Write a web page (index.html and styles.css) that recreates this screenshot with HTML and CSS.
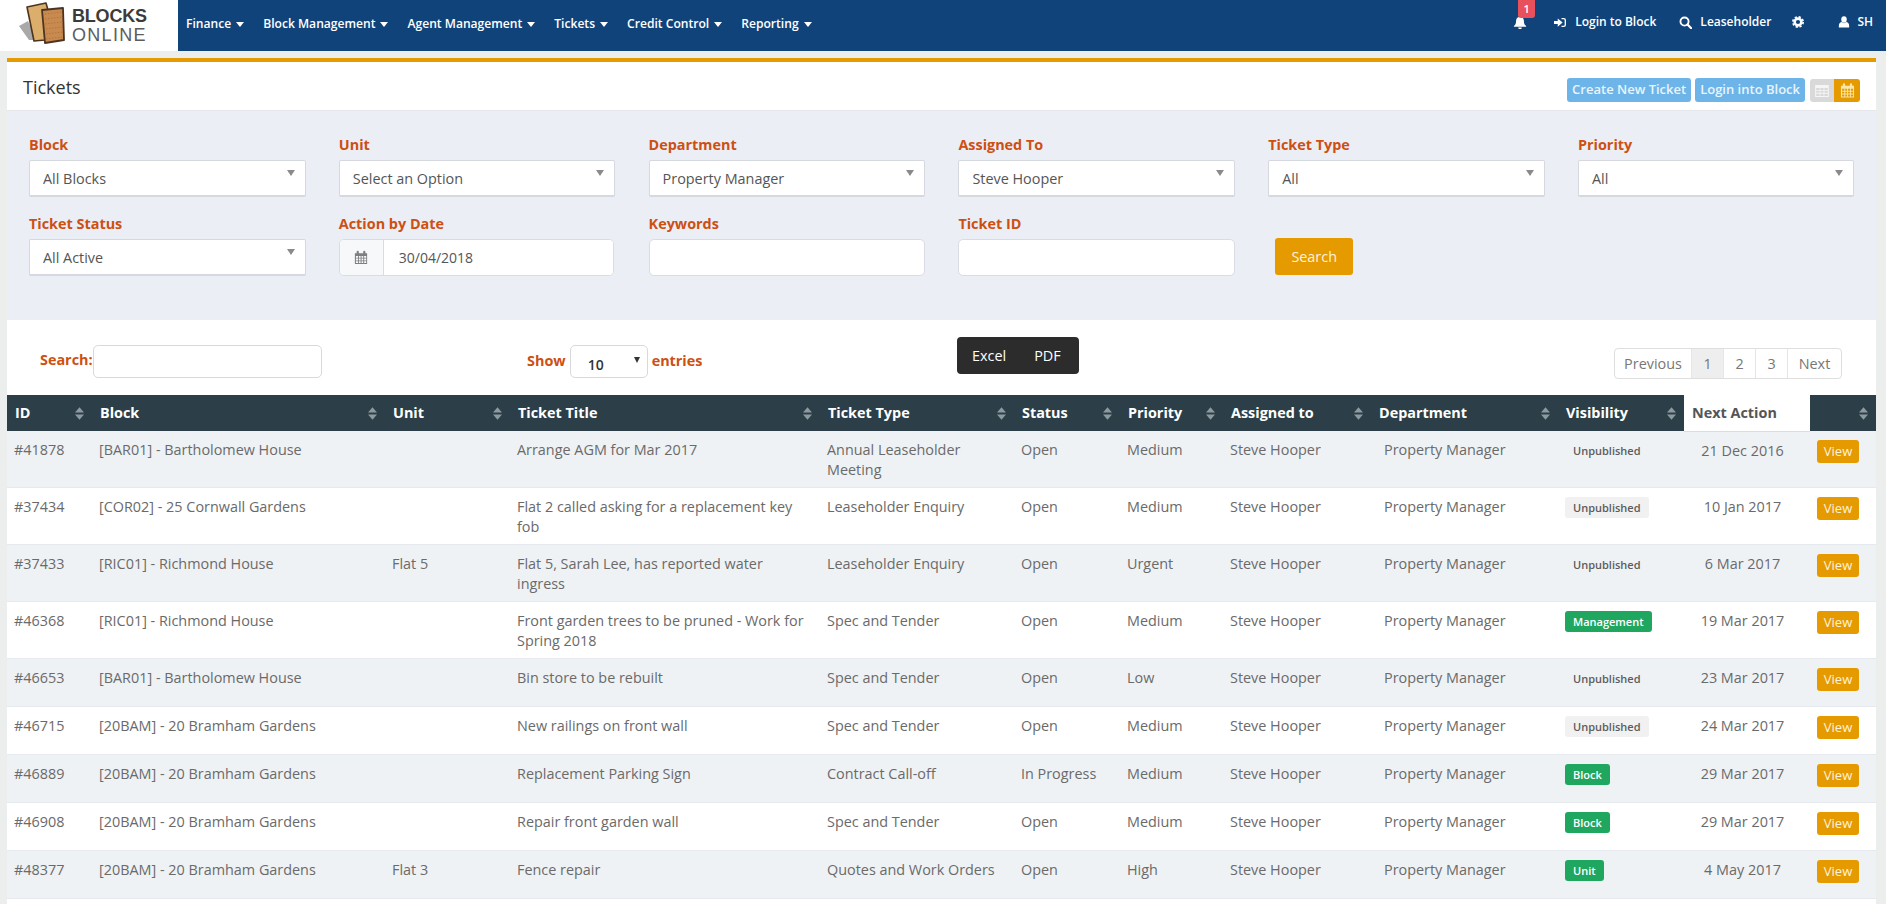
FILE: index.html
```html
<!DOCTYPE html>
<html lang="en">
<head>
<meta charset="utf-8">
<title>Tickets - Blocks Online</title>
<link rel="stylesheet" href="styles.css">
</head>
<body>
<svg class="defs" width="0" height="0" aria-hidden="true">
  <defs>
    <symbol id="i-sort" viewBox="0 0 10 14"><path d="M5 0 10 6H0zM5 14 0 8H10z"/></symbol>
    <symbol id="i-cal" viewBox="0 0 16 16"><path fill-rule="evenodd" d="M1 3h2V1.500a1 1 0 0 1 2.500 0V3h5V1.500a1 1 0 0 1 2.500 0V3h2v12.500H1zM2.200 6.200v2h2.400v-2zm3.400 0v2h2v-2zm3 0v2h2v-2zm3 0v2h2.400v-2zM2.200 9.200v2.100h2.400V9.200zm3.400 0v2.100h2V9.200zm3 0v2.100h2V9.200zm3 0v2.100h2.400V9.200zM2.200 12.300v2h2.400v-2zm3.400 0v2h2v-2zm3 0v2h2v-2zm3 0v2h2.400v-2z"/></symbol>
    <symbol id="i-grid" viewBox="0 0 16 14"><path fill-rule="evenodd" d="M0 0h16v14H0zM1.200 3.500v2.300h4v-2.300zm5 0v2.300h3.600v-2.300zm4.600 0v2.300h4v-2.300zM1.200 6.800v2.300h4V6.800zm5 0v2.300h3.600V6.800zm4.600 0v2.300h4V6.800zM1.200 10.100v2.700h4v-2.700zm5 0v2.700h3.600v-2.700zm4.600 0v2.700h4v-2.700z"/></symbol>
  </defs>
</svg>

<header class="topbar">
  <a class="logo">
    <svg class="logo-mark" viewBox="0 0 50 44" aria-hidden="true">
      <path d="M0 24 9 19 18 38 10 38z" fill="#a9a9a9"/>
      <path d="M8 5 27 1 29 8 26 38 15 39z" fill="#dcae6c" stroke="#4c3420" stroke-width="1.600" stroke-linejoin="round"/>
      <path d="M23 8 44 6 45 38 26 41z" fill="#c98a50" stroke="#4c3420" stroke-width="1.800" stroke-linejoin="round"/>
      <path d="M26 12 43 10M26 17 43 15M26 22 43 20M27 27 44 25M27 32 44 30M27 37 44 35" stroke="#a86f3c" stroke-width=".8" stroke-dasharray="1.500 1.500"/>
    </svg>
    <span class="logo-text"><b>BLOCKS</b><i>ONLINE</i></span>
  </a>
  <nav class="nav">
    <a>Finance<span class="caret"></span></a>
    <a>Block Management<span class="caret"></span></a>
    <a>Agent Management<span class="caret"></span></a>
    <a>Tickets<span class="caret"></span></a>
    <a>Credit Control<span class="caret"></span></a>
    <a>Reporting<span class="caret"></span></a>
  </nav>
  <div class="topright">
    <a class="bell">
      <svg viewBox="0 0 16 16" width="14" height="14" aria-hidden="true"><path d="M8 1a1.200 1.200 0 0 1 1.200 1.200C11.500 2.800 12.500 4.800 12.500 7c0 3 1 4.500 2.500 5.500v1H1v-1C2.500 11.500 3.500 10 3.500 7c0-2.200 1-4.200 3.300-4.800A1.200 1.200 0 0 1 8 1zM6 14.300a2 2 0 0 0 4 0z"/></svg>
      <span class="badge-count">1</span>
    </a>
    <a class="tr-login">
      <svg viewBox="0 0 16 14" width="12" height="11" aria-hidden="true"><path d="M0 5h5V1.500L11.500 7 5 12.500V9H0zM10 1h3a3 3 0 0 1 3 3v6a3 3 0 0 1-3 3h-3v-1.800h3a1.200 1.200 0 0 0 1.200-1.200V4A1.200 1.200 0 0 0 13 2.800h-3z"/></svg>
      Login to Block
    </a>
    <a class="tr-lease">
      <svg viewBox="0 0 16 16" width="13" height="13" aria-hidden="true"><circle cx="6.800" cy="6.800" r="5" fill="none" stroke="#fff" stroke-width="2.300"/><path d="M10.500 10.500 15 15" stroke="#fff" stroke-width="2.800" stroke-linecap="round"/></svg>
      Leaseholder
    </a>
    <a class="tr-cog">
      <svg viewBox="0 0 16 16" width="12" height="12" aria-hidden="true"><circle cx="8" cy="8" r="4.500" fill="none" stroke="#fff" stroke-width="3.400"/><circle cx="8" cy="8" r="6.900" fill="none" stroke="#fff" stroke-width="2.200" stroke-dasharray="3 2.420"/></svg>
    </a>
    <a class="tr-user">
      <svg viewBox="0 0 14 14" width="12" height="12" aria-hidden="true"><ellipse cx="7" cy="4" rx="3.200" ry="3.800"/><path d="M1 13.500V11c0-2.500 1.800-3.700 3.500-4a3.400 3.400 0 0 0 5 0C11.200 7.300 13 8.500 13 11v2.500z"/></svg>
      SH
    </a>
  </div>
</header>

<main class="page">
  <div class="titlebar">
    <h1>Tickets</h1>
    <div class="actions">
      <a class="btn-blue">Create New Ticket</a>
      <a class="btn-blue">Login into Block</a>
      <div class="toggle">
        <span class="tg-grid"><svg width="14" height="12" aria-hidden="true"><use href="#i-grid"/></svg></span>
        <span class="tg-cal"><svg width="15" height="15" aria-hidden="true"><use href="#i-cal"/></svg></span>
      </div>
    </div>
  </div>

  <section class="filters">
    <div class="field"><label>Block</label><div class="select"><select><option>All Blocks</option></select></div></div>
    <div class="field"><label>Unit</label><div class="select"><select><option>Select an Option</option></select></div></div>
    <div class="field"><label>Department</label><div class="select"><select><option>Property Manager</option></select></div></div>
    <div class="field"><label>Assigned To</label><div class="select"><select><option>Steve Hooper</option></select></div></div>
    <div class="field"><label>Ticket Type</label><div class="select"><select><option>All</option></select></div></div>
    <div class="field"><label>Priority</label><div class="select"><select><option>All</option></select></div></div>
    <div class="field"><label>Ticket Status</label><div class="select"><select><option>All Active</option></select></div></div>
    <div class="field"><label>Action by Date</label>
      <div class="dategroup">
        <span class="dateicon"><svg width="14" height="15" aria-hidden="true"><use href="#i-cal"/></svg></span>
        <input class="dateinput" type="text" value="30/04/2018">
      </div>
    </div>
    <div class="field"><label>Keywords</label><input class="textinput" type="text"></div>
    <div class="field"><label>Ticket ID</label><input class="textinput" type="text"></div>
    <div class="field field-action"><button class="btn-search" type="button">Search</button></div>
  </section>

  <section class="results">
    <div class="toolbar">
      <div class="tb-search"><label>Search:</label><input type="text"></div>
      <div class="tb-show">
        <span>Show</span>
        <div class="lenselect"><select><option>10</option></select></div>
        <span>entries</span>
      </div>
      <div class="tb-export"><a>Excel</a><a>PDF</a></div>
      <div class="pager">
        <a class="pg-prev">Previous</a><a class="pg-n is-active">1</a><a class="pg-n">2</a><a class="pg-n">3</a><a class="pg-next">Next</a>
      </div>
    </div>

    <table class="grid">
      <colgroup>
        <col class="c-id"><col class="c-block"><col class="c-unit"><col class="c-title"><col class="c-type"><col class="c-status"><col class="c-prio"><col class="c-asg"><col class="c-dept"><col class="c-vis"><col class="c-next"><col class="c-act">
      </colgroup>
      <thead>
        <tr>
          <th><div class="th">ID<svg class="sort"><use href="#i-sort"/></svg></div></th>
          <th><div class="th">Block<svg class="sort"><use href="#i-sort"/></svg></div></th>
          <th><div class="th">Unit<svg class="sort"><use href="#i-sort"/></svg></div></th>
          <th><div class="th">Ticket Title<svg class="sort"><use href="#i-sort"/></svg></div></th>
          <th><div class="th">Ticket Type<svg class="sort"><use href="#i-sort"/></svg></div></th>
          <th><div class="th">Status<svg class="sort"><use href="#i-sort"/></svg></div></th>
          <th><div class="th">Priority<svg class="sort"><use href="#i-sort"/></svg></div></th>
          <th><div class="th">Assigned to<svg class="sort"><use href="#i-sort"/></svg></div></th>
          <th><div class="th">Department<svg class="sort"><use href="#i-sort"/></svg></div></th>
          <th><div class="th">Visibility<svg class="sort"><use href="#i-sort"/></svg></div></th>
          <th class="th-active"><div class="th">Next Action</div></th>
          <th><div class="th th-end"><svg class="sort"><use href="#i-sort"/></svg></div></th>
        </tr>
      </thead>
      <tbody>
        <tr><td>#41878</td><td>[BAR01] - Bartholomew House</td><td></td><td>Arrange AGM for Mar 2017</td><td>Annual Leaseholder Meeting</td><td>Open</td><td>Medium</td><td>Steve Hooper</td><td class="td-dept">Property Manager</td><td><span class="tag tag-grey">Unpublished</span></td><td class="td-date">21 Dec 2016</td><td><a class="btn-view">View</a></td></tr>
        <tr><td>#37434</td><td>[COR02] - 25 Cornwall Gardens</td><td></td><td>Flat 2 called asking for a replacement key fob</td><td>Leaseholder Enquiry</td><td>Open</td><td>Medium</td><td>Steve Hooper</td><td class="td-dept">Property Manager</td><td><span class="tag tag-grey">Unpublished</span></td><td class="td-date">10 Jan 2017</td><td><a class="btn-view">View</a></td></tr>
        <tr><td>#37433</td><td>[RIC01] - Richmond House</td><td>Flat 5</td><td>Flat 5, Sarah Lee, has reported water ingress</td><td>Leaseholder Enquiry</td><td>Open</td><td>Urgent</td><td>Steve Hooper</td><td class="td-dept">Property Manager</td><td><span class="tag tag-grey">Unpublished</span></td><td class="td-date">6 Mar 2017</td><td><a class="btn-view">View</a></td></tr>
        <tr><td>#46368</td><td>[RIC01] - Richmond House</td><td></td><td>Front garden trees to be pruned - Work for Spring 2018</td><td>Spec and Tender</td><td>Open</td><td>Medium</td><td>Steve Hooper</td><td class="td-dept">Property Manager</td><td><span class="tag tag-green">Management</span></td><td class="td-date">19 Mar 2017</td><td><a class="btn-view">View</a></td></tr>
        <tr><td>#46653</td><td>[BAR01] - Bartholomew House</td><td></td><td>Bin store to be rebuilt</td><td>Spec and Tender</td><td>Open</td><td>Low</td><td>Steve Hooper</td><td class="td-dept">Property Manager</td><td><span class="tag tag-grey">Unpublished</span></td><td class="td-date">23 Mar 2017</td><td><a class="btn-view">View</a></td></tr>
        <tr><td>#46715</td><td>[20BAM] - 20 Bramham Gardens</td><td></td><td>New railings on front wall</td><td>Spec and Tender</td><td>Open</td><td>Medium</td><td>Steve Hooper</td><td class="td-dept">Property Manager</td><td><span class="tag tag-grey">Unpublished</span></td><td class="td-date">24 Mar 2017</td><td><a class="btn-view">View</a></td></tr>
        <tr><td>#46889</td><td>[20BAM] - 20 Bramham Gardens</td><td></td><td>Replacement Parking Sign</td><td>Contract Call-off</td><td>In Progress</td><td>Medium</td><td>Steve Hooper</td><td class="td-dept">Property Manager</td><td><span class="tag tag-green">Block</span></td><td class="td-date">29 Mar 2017</td><td><a class="btn-view">View</a></td></tr>
        <tr><td>#46908</td><td>[20BAM] - 20 Bramham Gardens</td><td></td><td>Repair front garden wall</td><td>Spec and Tender</td><td>Open</td><td>Medium</td><td>Steve Hooper</td><td class="td-dept">Property Manager</td><td><span class="tag tag-green">Block</span></td><td class="td-date">29 Mar 2017</td><td><a class="btn-view">View</a></td></tr>
        <tr><td>#48377</td><td>[20BAM] - 20 Bramham Gardens</td><td>Flat 3</td><td>Fence repair</td><td>Quotes and Work Orders</td><td>Open</td><td>High</td><td>Steve Hooper</td><td class="td-dept">Property Manager</td><td><span class="tag tag-green">Unit</span></td><td class="td-date">4 May 2017</td><td><a class="btn-view">View</a></td></tr>
      </tbody>
    </table>
  </section>
</main>
</body>
</html>
```
FILE: styles.css
```css
* { box-sizing: border-box; }
html, body { height: 100%; }
body {
  margin: 0;
  height: 904px;
  overflow: hidden;
  background: #eceded;
  font-family: "Open Sans", "Liberation Sans", sans-serif;
  font-size: 14.4px;
  line-height: 20px;
  color: #666;
}
.defs { position: absolute; }
a { text-decoration: none; color: inherit; }

/* top bar */
.topbar {
  display: flex;
  height: 51px;
  background: #11437b;
  color: #fff;
}
.logo {
  flex: 0 0 178px;
  display: flex;
  align-items: flex-start;
  background: #fff;
  padding: 2px 0 0 19px;
}
.logo-mark { width: 50px; height: 44px; flex: none; }
.logo-text {
  display: flex;
  flex-direction: column;
  margin: 5px 0 0 3px;
  font-family: "Liberation Sans", sans-serif;
  font-size: 18px;
  line-height: 19px;
  color: #3b3b3b;
}
.logo-text b { letter-spacing: -.2px; }
.logo-text i { font-style: normal; font-weight: 400; color: #5c5c5c; letter-spacing: 1.300px; }
.nav {
  display: flex;
  gap: 19px;
  padding: 14px 0 0 8px;
  font-size: 12.100px;
  font-weight: 600;
  line-height: 20px;
}
.nav a { display: flex; align-items: center; height: 20px; }
.caret {
  width: 0; height: 0;
  margin-left: 5px;
  border: 4px solid transparent;
  border-top: 5px solid #fff;
  border-bottom: 0;
}
.topright {
  margin-left: auto;
  display: flex;
  align-items: flex-start;
  padding-top: 12px;
  font-size: 12px;
  font-weight: 600;
  line-height: 20px;
}
.topright a { display: flex; align-items: center; height: 20px; }
.topright svg { fill: #fff; flex: none; }
.bell { position: relative; margin-right: 27px; }
.badge-count {
  position: absolute;
  left: 5px;
  top: -12px;
  width: 17px;
  height: 18px;
  background: #e8505b;
  border-radius: 0 0 3px 3px;
  font-size: 11px;
  line-height: 18px;
  text-align: center;
}
.tr-login svg { margin-right: 9px; }
.tr-login { margin-right: 23px; }
.tr-lease svg { margin-right: 8px; }
.tr-lease { margin-right: 21px; }
.tr-cog { margin-right: 34px; }
.tr-user { margin-right: 13px; }
.tr-user svg { margin-right: 7px; }

/* page */
.page { margin: 7px 10px 0 7px; border-top: 4px solid #e59a00; }
.titlebar {
  height: 49px;
  background: #fff;
  display: flex;
  justify-content: space-between;
  padding: 0 16px 0 16px;
  border-bottom: 1px solid #e4e6ea;
}
.titlebar h1 {
  margin: 13px 0 0;
  font-size: 18px;
  line-height: 24px;
  font-weight: 400;
  color: #333;
}
.actions { display: flex; gap: 4px; padding-top: 16px; align-items: flex-start; }
.btn-blue {
  height: 24px;
  padding: 0 5px;
  background: #6db5e9;
  color: #e8f4fc;
  border-radius: 3px;
  font-size: 13px;
  font-weight: 600;
  line-height: 23px;
  white-space: nowrap;
}
.toggle { display: flex; height: 23px; margin: 1px 0 0 1px; border-radius: 3px; overflow: hidden; }
.tg-grid, .tg-cal { display: flex; align-items: center; justify-content: center; }
.tg-grid { width: 24px; background: #d9d9d9; }
.tg-grid svg { fill: #f5f5f5; }
.tg-cal { width: 26px; background: #e59a00; }
.tg-cal svg { fill: #f9e6a8; }

/* filters */
.filters {
  display: grid;
  grid-template-columns: repeat(6, 276.500px);
  column-gap: 33.300px;
  row-gap: 17px;
  height: 209px;
  padding: 24px 0 0 22px;
  background: #ebeef5;
  align-content: start;
}
.field label {
  display: block;
  height: 20px;
  margin-bottom: 5px;
  font-weight: 700;
  color: #cd5012;
}
.field-action { align-self: end; padding-left: 7px; }
.select { position: relative; height: 37px; }
.select select {
  appearance: none;
  -webkit-appearance: none;
  width: 100%;
  height: 37px;
  padding: 0 13px;
  border: 1px solid #d5d8de;
  border-bottom-width: 2px;
  border-radius: 2px;
  background: #fff;
  font: 400 14.400px "Open Sans", sans-serif;
  color: #555;
}
.select::after {
  content: "";
  position: absolute;
  right: 11px;
  top: 10px;
  border: 4px solid transparent;
  border-top: 6px solid #8a8a8a;
  border-bottom: 0;
}
.textinput, .dategroup {
  width: 100%;
  height: 37px;
  border: 1px solid #d9dce3;
  border-radius: 5px;
  background: #fff;
}
.textinput { display: block; }
.dategroup { display: flex; width: 275px; overflow: hidden; }
.dateicon {
  flex: 0 0 44px;
  display: flex;
  align-items: center;
  justify-content: center;
  background: #f7f8fa;
  border-right: 1px solid #d9dce3;
}
.dateicon svg { fill: #7f7f7f; }
.dateinput {
  flex: 1;
  min-width: 0;
  border: 0;
  padding: 0 15px;
  font: 400 14px "Open Sans", sans-serif;
  color: #555;
  background: #fff;
}
.btn-search {
  display: block;
  width: 78px;
  height: 37px;
  margin-bottom: 1px;
  border: 0;
  border-radius: 3px;
  background: #e59a00;
  color: #fdf3dc;
  font: 400 14.400px "Open Sans", sans-serif;
}

/* results */
.results { background: #fff; height: 584px; overflow: hidden; }
.toolbar {
  display: flex;
  align-items: flex-start;
  height: 75px;
  padding: 0 34px 0 33px;
}
.tb-search {
  flex: 0 0 487px;
  display: flex;
  align-items: center;
  margin-top: 25px;
}
.tb-search label { font-weight: 700; color: #cd5012; margin-top: -4px; }
.tb-search input {
  width: 229px;
  height: 33px;
  border: 1px solid #d9d9dd;
  border-radius: 5px;
}
.tb-show {
  flex: 0 0 430px;
  display: flex;
  align-items: center;
  gap: 4px;
  margin-top: 25px;
  font-weight: 700;
  color: #cd5012;
}
.tb-show span { margin-top: -2px; }
.lenselect { position: relative; }
.lenselect select {
  appearance: none;
  -webkit-appearance: none;
  display: block;
  width: 78px;
  height: 33px;
  padding: 6px 0 0 17px;
  border: 1px solid #d9d9dd;
  border-radius: 5px;
  background: #fff;
  font: 600 14px "Open Sans", sans-serif;
  color: #333;
}
.lenselect::after {
  content: "";
  position: absolute;
  right: 8px;
  top: 12px;
  border: 3px solid transparent;
  border-top: 6px solid #333;
  border-bottom: 0;
}
.tb-export {
  display: flex;
  width: 122px;
  height: 37px;
  margin-top: 17px;
  padding: 1px 0 0 15px;
  gap: 28px;
  align-items: center;
  background: #2c2c2c;
  border-radius: 4px;
  color: #fff;
}
.pager {
  margin-left: auto;
  margin-top: 28px;
  display: flex;
  height: 31px;
  border: 1px solid #dedede;
  border-radius: 4px;
  line-height: 29px;
  color: #777;
}
.pager a { text-align: center; border-right: 1px solid #e6e6e6; }
.pager a:last-child { border-right: 0; }
.pg-prev { width: 77px; }
.pg-n { width: 32px; }
.pg-next { width: 53px; }
.is-active { background: #eeeeee; }

/* table */
.grid { width: 1869px; table-layout: fixed; border-collapse: collapse; }
.c-id { width: 85px; }
.c-block { width: 293px; }
.c-unit { width: 125px; }
.c-title { width: 310px; }
.c-type { width: 194px; }
.c-status { width: 106px; }
.c-prio { width: 103px; }
.c-asg { width: 148px; }
.c-dept { width: 187px; }
.c-vis { width: 126px; }
.c-next { width: 126px; }
.c-act { width: 66px; }
.grid th {
  height: 36px;
  padding: 0 7px 0 8px;
  background: #2c3f48;
  color: #fff;
  font-weight: 700;
  text-align: left;
}
.grid .th-active { background: #fff; color: #555; border-bottom: 1px solid #ddd; }
.th { display: flex; align-items: center; justify-content: space-between; }
.th-end { justify-content: flex-end; }
.sort { width: 9px; height: 13px; fill: #8d9a9f; flex: none; margin-right: 1px; }
.grid td {
  height: 48px;
  padding: 9px 7px 7px;
  vertical-align: top;
  border-bottom: 1px solid #e6e9ed;
  color: #6a6a6a;
}
.grid tbody tr:nth-child(odd) td { background: #eff2f5; }
.grid tbody tr:nth-child(even) td { background: #fff; }
.grid .td-dept { padding-left: 13px; }
.grid .td-date { text-align: center; padding-right: 16px; }
.tag {
  display: inline-block;
  height: 21px;
  padding: 0 8px;
  border-radius: 3px;
  font-size: 11px;
  font-weight: 600;
  line-height: 21px;
  vertical-align: top;
}
.tag-grey { color: #5c5c5c; background: #f1f1f1; }
tr:nth-child(odd) .tag-grey { background: transparent; }
.tag-green { color: #fff; background: #1fa65f; }
.btn-view {
  display: block;
  width: 42px;
  height: 23px;
  background: #e59a00;
  color: #fff3dc;
  border-radius: 3px;
  font-size: 13px;
  line-height: 23px;
  text-align: center;
}
```
